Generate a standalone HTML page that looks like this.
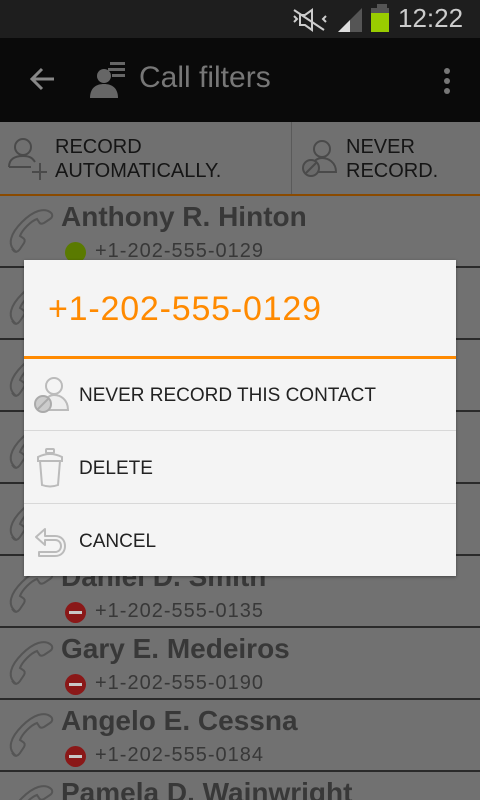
<!DOCTYPE html>
<html style="height:800px;overflow:hidden"><head><style>
*{margin:0;padding:0;box-sizing:border-box}
body{width:480px;height:800px;overflow:hidden;background:#717171;font-family:"Liberation Sans",sans-serif;position:relative}
.abs{position:absolute}
.sb{left:0;top:0;width:480px;height:38px;background:#1e1e1e}
.ab{left:0;top:38px;width:480px;height:84px;background:#0a0a0a}
.fb{left:0;top:122px;width:480px;height:74px;background:#707070;border-bottom:2px solid #8a4a00}
.row{position:absolute;left:0;width:480px;height:72px;border-bottom:2px solid #2a2a2a}
.name{position:absolute;left:61px;top:5px;font-size:28px;font-weight:bold;color:#383838}
.ph{position:absolute;left:95px;top:44px;font-size:20px;color:#383838;letter-spacing:1px}
.dot{position:absolute;left:65px;top:46px;width:21px;height:21px;border-radius:50%;background:#8a1818}
.dot.r::after{content:"";position:absolute;left:4px;top:9px;width:13px;height:3px;background:#c8c8c8}
.phone{position:absolute;left:6px;top:8px}
.dlg{left:24px;top:260px;width:432px;height:316px;background:#f4f4f4;box-shadow:0 1px 3px rgba(0,0,0,.4)}
.item{position:absolute;left:0;width:432px;height:72px;font-size:19px;color:#222}
.item span{position:absolute;left:55px;top:26px}
</style></head><body>
<div class="abs sb">
<svg class="abs" style="left:292px;top:8px" width="36" height="24"><g stroke="#ccc" stroke-width="2" fill="none"><path d="M8 7h5l7-5v20l-7-5H8z"/><path d="M2 2l30 20"/><path d="M2 8l3 3-3 3M34 8l-3 3 3 3"/></g></svg>
<svg class="abs" style="left:336px;top:6px" width="28" height="26"><path d="M2 26L26 2v24z" fill="#555"/><path d="M2 26l12-12v12z" fill="#ddd"/></svg>
<div class="abs" style="top:4px;height:4px;background:#555;left:377px;width:10px"></div>
<div class="abs" style="left:371px;top:8px;width:18px;height:5px;background:#555"></div>
<div class="abs" style="left:371px;top:13px;width:18px;height:19px;background:#99cc00"></div>
<div class="abs" style="left:398px;top:3px;font-size:26px;color:#ccc">12:22</div>
</div>
<div class="abs ab">
<svg class="abs" style="left:28px;top:27px" width="28" height="28"><path d="M26 14H4M14 4L4 14l10 10" stroke="#888" stroke-width="3" fill="none"/></svg>
<svg class="abs" style="left:88px;top:22px" width="40" height="40"><g fill="#666"><circle cx="16" cy="16" r="7"/><path d="M2 38c0-10 6-14 14-14s14 4 14 14z"/><rect x="22" y="2" width="15" height="3"/><rect x="20" y="8" width="17" height="3"/><rect x="24" y="14" width="13" height="3"/></g></svg>
<div class="abs" style="left:139px;top:23px;font-size:30px;color:#777">Call filters</div>
<div class="abs" style="left:444px;top:30px;width:6px;height:6px;border-radius:50%;background:#777;box-shadow:0 10px 0 #777,0 20px 0 #777"></div>
</div>
<div class="abs fb">
<svg class="abs" style="left:7px;top:14px" width="40" height="46"><g stroke="#4a4a4a" stroke-width="2" fill="none"><circle cx="16" cy="11" r="8"/><path d="M2 31c0-8 6-11 14-11s10 3 12 6M2 31h22"/><path d="M33 27v17M25 36h17"/></g></svg>
<div class="abs" style="left:55px;top:13px;font-size:20px;color:#151515;line-height:24px">RECORD<br>AUTOMATICALLY.</div>
<div class="abs" style="left:291px;top:0;width:1px;height:72px;background:#5a5a5a"></div>
<svg class="abs" style="left:300px;top:16px" width="40" height="40"><g fill="none" stroke="#4a4a4a" stroke-width="2"><circle cx="22" cy="11" r="8"/><path d="M12 34c0-10 4-14 10-14s14 4 14 14z"/></g><circle cx="11" cy="30" r="8" fill="#6a6a6a" stroke="#4a4a4a" stroke-width="2"/><path d="M6 35l10-10" stroke="#4a4a4a" stroke-width="2"/></svg>
<div class="abs" style="left:346px;top:13px;font-size:20px;color:#151515;line-height:24px">NEVER<br>RECORD.</div>
</div>
<div class="row" style="top:196px"><svg class="phone" width="50" height="52"><path d="M8 46C2 40 4 30 16 18S38 4 44 8c3 2 3 5 0 7l-6 4c-2 1-4 1-5-1l-2-3c-3 1-7 4-10 7s-6 7-7 10l3 2c2 1 2 3 1 5l-4 6c-2 3-5 4-7 1z" stroke="#555" stroke-width="2" fill="none"/></svg><div class="name">Anthony R. Hinton</div><div class="dot" style="background:#5a7a00"></div><div class="ph">+1-202-555-0129</div></div>
<div class="row" style="top:268px"><svg class="phone" width="50" height="52"><path d="M8 46C2 40 4 30 16 18S38 4 44 8c3 2 3 5 0 7l-6 4c-2 1-4 1-5-1l-2-3c-3 1-7 4-10 7s-6 7-7 10l3 2c2 1 2 3 1 5l-4 6c-2 3-5 4-7 1z" stroke="#555" stroke-width="2" fill="none"/></svg></div>
<div class="row" style="top:340px"><svg class="phone" width="50" height="52"><path d="M8 46C2 40 4 30 16 18S38 4 44 8c3 2 3 5 0 7l-6 4c-2 1-4 1-5-1l-2-3c-3 1-7 4-10 7s-6 7-7 10l3 2c2 1 2 3 1 5l-4 6c-2 3-5 4-7 1z" stroke="#555" stroke-width="2" fill="none"/></svg></div>
<div class="row" style="top:412px"><svg class="phone" width="50" height="52"><path d="M8 46C2 40 4 30 16 18S38 4 44 8c3 2 3 5 0 7l-6 4c-2 1-4 1-5-1l-2-3c-3 1-7 4-10 7s-6 7-7 10l3 2c2 1 2 3 1 5l-4 6c-2 3-5 4-7 1z" stroke="#555" stroke-width="2" fill="none"/></svg></div>
<div class="row" style="top:484px"><svg class="phone" width="50" height="52"><path d="M8 46C2 40 4 30 16 18S38 4 44 8c3 2 3 5 0 7l-6 4c-2 1-4 1-5-1l-2-3c-3 1-7 4-10 7s-6 7-7 10l3 2c2 1 2 3 1 5l-4 6c-2 3-5 4-7 1z" stroke="#555" stroke-width="2" fill="none"/></svg></div>
<div class="row" style="top:556px"><svg class="phone" width="50" height="52"><path d="M8 46C2 40 4 30 16 18S38 4 44 8c3 2 3 5 0 7l-6 4c-2 1-4 1-5-1l-2-3c-3 1-7 4-10 7s-6 7-7 10l3 2c2 1 2 3 1 5l-4 6c-2 3-5 4-7 1z" stroke="#555" stroke-width="2" fill="none"/></svg><div class="name">Daniel D. Smith</div><div class="dot r"></div><div class="ph">+1-202-555-0135</div></div>
<div class="row" style="top:628px"><svg class="phone" width="50" height="52"><path d="M8 46C2 40 4 30 16 18S38 4 44 8c3 2 3 5 0 7l-6 4c-2 1-4 1-5-1l-2-3c-3 1-7 4-10 7s-6 7-7 10l3 2c2 1 2 3 1 5l-4 6c-2 3-5 4-7 1z" stroke="#555" stroke-width="2" fill="none"/></svg><div class="name">Gary E. Medeiros</div><div class="dot r"></div><div class="ph">+1-202-555-0190</div></div>
<div class="row" style="top:700px"><svg class="phone" width="50" height="52"><path d="M8 46C2 40 4 30 16 18S38 4 44 8c3 2 3 5 0 7l-6 4c-2 1-4 1-5-1l-2-3c-3 1-7 4-10 7s-6 7-7 10l3 2c2 1 2 3 1 5l-4 6c-2 3-5 4-7 1z" stroke="#555" stroke-width="2" fill="none"/></svg><div class="name">Angelo E. Cessna</div><div class="dot r"></div><div class="ph">+1-202-555-0184</div></div>
<div class="row" style="top:772px;height:28px;border:0;overflow:hidden"><svg class="phone" width="50" height="52"><path d="M8 46C2 40 4 30 16 18S38 4 44 8c3 2 3 5 0 7l-6 4c-2 1-4 1-5-1l-2-3c-3 1-7 4-10 7s-6 7-7 10l3 2c2 1 2 3 1 5l-4 6c-2 3-5 4-7 1z" stroke="#555" stroke-width="2" fill="none"/></svg><div class="name">Pamela D. Wainwright</div></div>

<div class="abs dlg">
<div class="abs" style="left:24px;top:30px;font-size:34px;color:#ff8a00;letter-spacing:0.8px">+1-202-555-0129</div>
<div class="abs" style="left:0;top:96px;width:432px;height:3px;background:#ff8a00"></div>
<div class="item" style="top:99px;border-bottom:1px solid #d8d8d8">
<svg class="abs" style="left:8px;top:17px" width="38" height="38"><g fill="none" stroke="#bbb" stroke-width="2"><circle cx="22" cy="10" r="8"/><path d="M12 34c0-10 4-15 10-15s14 4 14 15z" fill="#eee"/></g><circle cx="11" cy="28" r="8" fill="#ccc" stroke="#aaa" stroke-width="2"/><path d="M6 33l10-10" stroke="#aaa" stroke-width="2"/></svg>
<span>NEVER RECORD THIS CONTACT</span></div>
<div class="item" style="top:172px;border-bottom:1px solid #d8d8d8">
<svg class="abs" style="left:12px;top:15px" width="30" height="42"><g fill="#f4f4f4" stroke="#bbb" stroke-width="2"><rect x="10" y="2" width="8" height="4" rx="1"/><path d="M2 10q12-6 24 0v4H2z"/><path d="M4 14h20l-2 24q-8 3-16 0z"/></g></svg>
<span>DELETE</span></div>
<div class="item" style="top:245px">
<svg class="abs" style="left:9px;top:20px" width="36" height="34"><path d="M12 4L3 12l9 8v-5h10c4 0 6 3 6 6s-2 6-6 6H6v4h16c7 0 10-5 10-10s-3-10-10-10H12z" fill="#f4f4f4" stroke="#bbb" stroke-width="2" stroke-linejoin="round"/></svg>
<span>CANCEL</span></div>
</div>
</body></html>
